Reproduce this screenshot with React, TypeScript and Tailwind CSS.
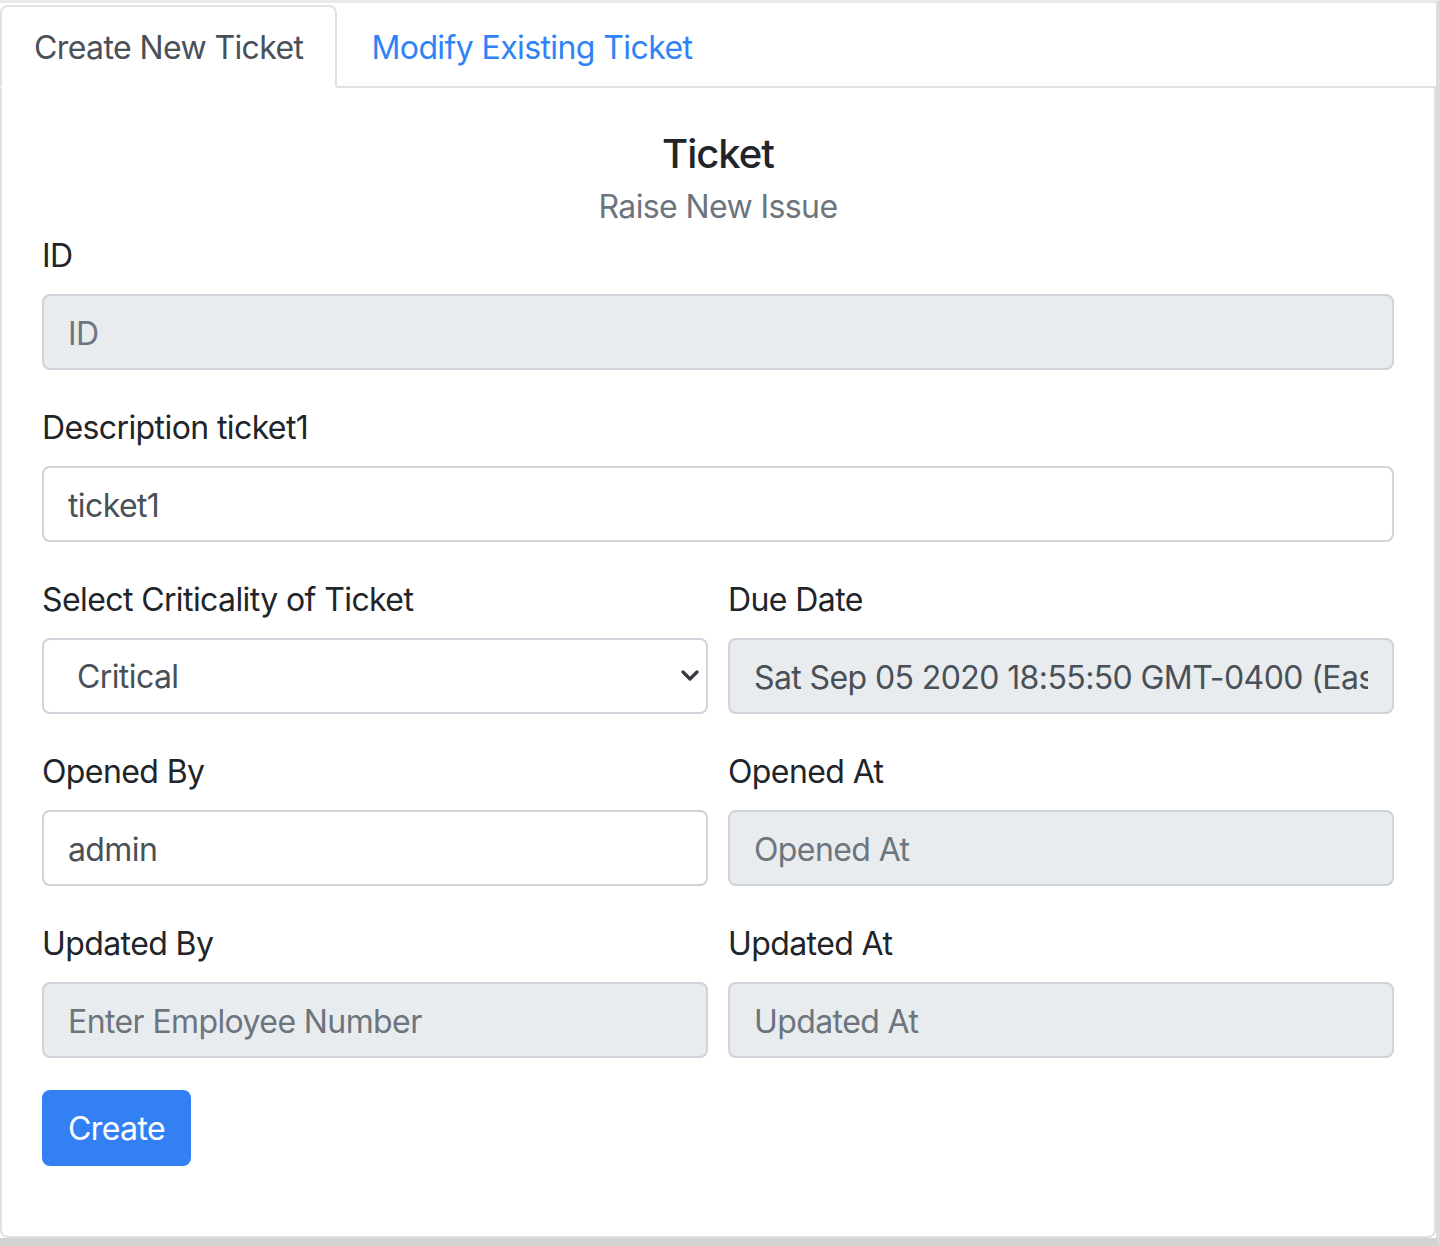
import React, { useState } from 'react';

const labelCls = 'block text-[32px] leading-[48px] tracking-[-0.6px] text-[#212529] pt-[2px] mb-[14px]';
const inputBase =
  'w-full h-[76px] px-[24px] pt-[2px] rounded-[8px] border-2 border-[#ced4da] text-[32px] tracking-[-0.6px] text-[#495057] placeholder:text-[#6c757d] outline-none';

const Field: React.FC<{ label: string; value?: string; placeholder?: string; disabled?: boolean }> = ({
  label,
  value,
  placeholder,
  disabled,
}) => (
  <div className="mb-[32px]">
    <label className={labelCls}>{label}</label>
    <input
      type="text"
      readOnly
      defaultValue={value}
      placeholder={placeholder}
      className={`${inputBase} ${disabled ? 'bg-[#e9ecef]' : 'bg-white'}`}
    />
  </div>
);

const App: React.FC = () => {
  const [tab, setTab] = useState<'create' | 'modify'>('create');

  const tabCls = (active: boolean) =>
    `h-[83px] -mb-[2px] px-[32px] pt-[2px] flex items-center text-[32px] tracking-[-0.6px] rounded-t-[8px] border-2 ${
      active ? 'bg-white text-[#495057] border-[#dee2e6] border-b-white' : 'text-[#3083f6] border-transparent'
    }`;

  return (
    <div className="w-[1440px] h-[1246px] border-t-[3px] border-t-[#e8e9eb] border-r-[4px] border-r-[#dcdcdc] border-b-[8px] border-b-[#d3d3d3] bg-white font-[Inter,'Noto_Sans',sans-serif]">
      {/* tabs */}
      <div className="flex pt-[2px] border-b-2 border-[#dee2e6]">
        <button onClick={() => setTab('create')} className={tabCls(tab === 'create')}>
          Create New Ticket
        </button>
        <button onClick={() => setTab('modify')} className={tabCls(tab === 'modify')}>
          Modify Existing Ticket
        </button>
      </div>

      {/* card */}
      <div className="h-[1150px] border-x-2 border-b-2 border-[#dee2e6] rounded-b-[8px] px-[40px] pt-[40px]">
        <h5 className="text-center text-[40px] leading-[48px] tracking-[-1px] font-medium text-[#212529] pt-[2px] -mb-[2px]">
          Ticket
        </h5>
        <h6 className="text-center text-[32px] leading-[38px] tracking-[-0.6px] mt-[12px] mb-[4px] text-[#6c757d]">
          Raise New Issue
        </h6>

        <form onSubmit={(e) => e.preventDefault()}>
          <Field label="ID" placeholder="ID" disabled />
          <Field label="Description ticket1" value="ticket1" />

          <div className="grid grid-cols-2 gap-x-[20px]">
            <div className="mb-[32px]">
              <label className={labelCls}>Select Criticality of Ticket</label>
              <div className="relative">
                <select
                  defaultValue="Critical"
                  className="w-full h-[76px] pl-[33px] pr-[48px] pt-[2px] rounded-[8px] border-2 border-[#ced4da] bg-white text-[32px] tracking-[-0.6px] text-[#495057] appearance-none outline-none"
                >
                  <option>Critical</option>
                  <option>High</option>
                  <option>Medium</option>
                  <option>Low</option>
                </select>
                <svg
                  className="absolute right-[9px] top-[32px] w-[18px] h-[12px] pointer-events-none"
                  viewBox="0 0 18 12"
                  fill="none"
                  stroke="#343a40"
                  strokeWidth="3.2"
                  strokeLinecap="round"
                  strokeLinejoin="round"
                >
                  <path d="M2 2l7 7 7-7" />
                </svg>
              </div>
            </div>
            <Field label="Due Date" value="Sat Sep 05 2020 18:55:50 GMT-0400 (Eastern Daylight Time)" disabled />

            <Field label="Opened By" value="admin" />
            <Field label="Opened At" placeholder="Opened At" disabled />

            <Field label="Updated By" placeholder="Enter Employee Number" disabled />
            <Field label="Updated At" placeholder="Updated At" disabled />
          </div>

          <button
            type="submit"
            className="h-[76px] px-[26px] pt-[2px] rounded-[8px] bg-[#3380f5] text-white text-[32px] tracking-[-0.6px]"
          >
            Create
          </button>
        </form>
      </div>
    </div>
  );
};

export default App;
